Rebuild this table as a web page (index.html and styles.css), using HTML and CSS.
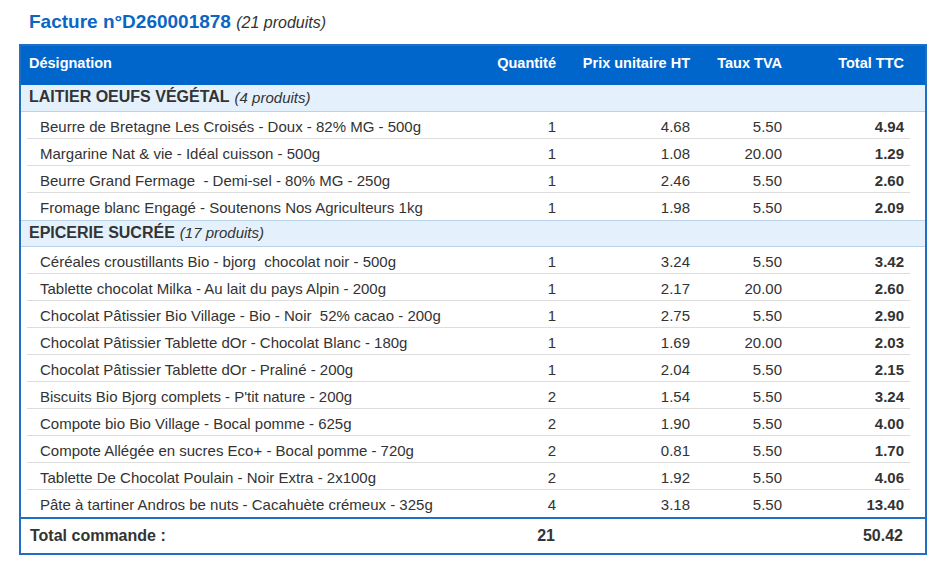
FILE: index.html
```html
<!DOCTYPE html>
<html lang="fr">
<head>
<meta charset="utf-8">
<title>Facture n°D260001878</title>
<link rel="stylesheet" href="styles.css">
</head>
<body>
<div class="page">
  <h1 class="title">Facture n°D260001878 <em>(21 produits)</em></h1>
  <div class="invoice">
    <div class="grid head">
      <div>Désignation</div>
      <div class="num">Quantité</div>
      <div class="num">Prix unitaire HT</div>
      <div class="num">Taux TVA</div>
      <div class="num">Total TTC</div>
    </div>

    <div class="cat">LAITIER OEUFS VÉGÉTAL <em>(4 produits)</em></div>
    <div class="items">
      <div class="grid item"><div>Beurre de Bretagne Les Croisés - Doux - 82% MG - 500g</div><div class="num">1</div><div class="num">4.68</div><div class="num">5.50</div><div class="num strong">4.94</div></div>
      <div class="grid item"><div>Margarine Nat &amp; vie - Idéal cuisson - 500g</div><div class="num">1</div><div class="num">1.08</div><div class="num">20.00</div><div class="num strong">1.29</div></div>
      <div class="grid item"><div>Beurre Grand Fermage &nbsp;- Demi-sel - 80% MG - 250g</div><div class="num">1</div><div class="num">2.46</div><div class="num">5.50</div><div class="num strong">2.60</div></div>
      <div class="grid item"><div>Fromage blanc Engagé - Soutenons Nos Agriculteurs 1kg</div><div class="num">1</div><div class="num">1.98</div><div class="num">5.50</div><div class="num strong">2.09</div></div>
    </div>

    <div class="cat">EPICERIE SUCRÉE <em>(17 produits)</em></div>
    <div class="items">
      <div class="grid item"><div>Céréales croustillants Bio - bjorg &nbsp;chocolat noir - 500g</div><div class="num">1</div><div class="num">3.24</div><div class="num">5.50</div><div class="num strong">3.42</div></div>
      <div class="grid item"><div>Tablette chocolat Milka - Au lait du pays Alpin - 200g</div><div class="num">1</div><div class="num">2.17</div><div class="num">20.00</div><div class="num strong">2.60</div></div>
      <div class="grid item"><div>Chocolat Pâtissier Bio Village - Bio - Noir &nbsp;52% cacao - 200g</div><div class="num">1</div><div class="num">2.75</div><div class="num">5.50</div><div class="num strong">2.90</div></div>
      <div class="grid item"><div>Chocolat Pâtissier Tablette dOr - Chocolat Blanc - 180g</div><div class="num">1</div><div class="num">1.69</div><div class="num">20.00</div><div class="num strong">2.03</div></div>
      <div class="grid item"><div>Chocolat Pâtissier Tablette dOr - Praliné - 200g</div><div class="num">1</div><div class="num">2.04</div><div class="num">5.50</div><div class="num strong">2.15</div></div>
      <div class="grid item"><div>Biscuits Bio Bjorg complets - P'tit nature - 200g</div><div class="num">2</div><div class="num">1.54</div><div class="num">5.50</div><div class="num strong">3.24</div></div>
      <div class="grid item"><div>Compote bio Bio Village - Bocal pomme - 625g</div><div class="num">2</div><div class="num">1.90</div><div class="num">5.50</div><div class="num strong">4.00</div></div>
      <div class="grid item"><div>Compote Allégée en sucres Eco+ - Bocal pomme - 720g</div><div class="num">2</div><div class="num">0.81</div><div class="num">5.50</div><div class="num strong">1.70</div></div>
      <div class="grid item"><div>Tablette De Chocolat Poulain - Noir Extra - 2x100g</div><div class="num">2</div><div class="num">1.92</div><div class="num">5.50</div><div class="num strong">4.06</div></div>
      <div class="grid item"><div>Pâte à tartiner Andros be nuts - Cacahuète crémeux - 325g</div><div class="num">4</div><div class="num">3.18</div><div class="num">5.50</div><div class="num strong">13.40</div></div>
    </div>

    <div class="grid total">
      <div>Total commande :</div>
      <div class="num">21</div>
      <div></div>
      <div></div>
      <div class="num">50.42</div>
    </div>
  </div>
</div>
</body>
</html>
```

FILE: styles.css
```css
* { box-sizing: border-box; }

body {
  margin: 0;
  background: #ffffff;
  font-family: "Liberation Sans", Arial, sans-serif;
  color: #333333;
}

.page {
  padding: 11px 15px 0 19px;
}

.title {
  margin: 0 0 10px 10px;
  font-size: 19px;
  line-height: 22px;
  font-weight: bold;
  color: #0b66c3;
}

.title em {
  font-weight: normal;
  font-style: italic;
  font-size: 16px;
  color: #333333;
}

.invoice {
  width: 908px;
  border: 2px solid #1f70c1;
}

.grid {
  display: grid;
  grid-template-columns: 1fr 86px 134px 92px 122px;
  align-items: center;
}

.num { text-align: right; }

.head {
  height: 39px;
  background: #0066cc;
  color: #ffffff;
  font-weight: bold;
  font-size: 14.5px;
  padding: 0 21px 5px 8px;
}

.cat {
  height: 27px;
  display: flex;
  align-items: center;
  gap: 5px;
  padding: 0 0 2px 8px;
  background: #e4f1fc;
  border-top: 1px solid #b9d4ea;
  border-bottom: 1px solid #b9d4ea;
  font-size: 16px;
  font-weight: bold;
  color: #333333;
}

.cat em {
  font-weight: normal;
  font-style: italic;
  font-size: 15px;
}

.head + .cat { border-top: none; }

.items {
  padding: 0 15px 0 6px;
}

.item {
  height: 27px;
  padding: 2px 6px 0 13px;
  font-size: 15px;
  border-bottom: 1px solid #dddddd;
}

.item:last-child { border-bottom: none; }

.strong { font-weight: bold; }

.total {
  height: 36px;
  border-top: 2px solid #1f70c1;
  padding: 0 22px 1px 9px;
  font-size: 16px;
  font-weight: bold;
}
```
